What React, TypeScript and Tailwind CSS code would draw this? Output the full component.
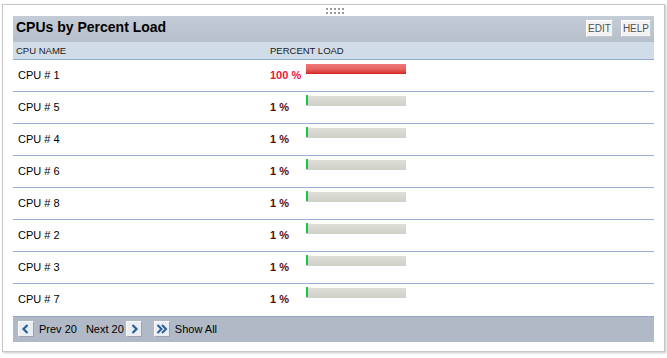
import React from "react";

const rows: { name: string; pct: number }[] = [
  { name: "CPU # 1", pct: 100 },
  { name: "CPU # 5", pct: 1 },
  { name: "CPU # 4", pct: 1 },
  { name: "CPU # 6", pct: 1 },
  { name: "CPU # 8", pct: 1 },
  { name: "CPU # 2", pct: 1 },
  { name: "CPU # 3", pct: 1 },
  { name: "CPU # 7", pct: 1 },
];

function Chevron({ dir }: { dir: "left" | "right" | "double" }) {
  return (
    <div className="w-[16px] h-[16px] bg-[#eaeef3] border border-t-[#f8f9fb] border-l-[#f8f9fb] border-b-[#9aa3b0] border-r-[#9aa3b0] flex items-center justify-center">
      <svg width="12" height="12" viewBox="0 0 12 12">
        {dir === "left" && (
          <path d="M7.5 2 L3.5 6 L7.5 10" fill="none" stroke="#2b5e9c" strokeWidth="2.2" />
        )}
        {dir === "right" && (
          <path d="M4.5 2 L8.5 6 L4.5 10" fill="none" stroke="#2b5e9c" strokeWidth="2.2" />
        )}
        {dir === "double" && (
          <>
            <path d="M1.5 2 L5.5 6 L1.5 10" fill="none" stroke="#2b5e9c" strokeWidth="2" />
            <path d="M6 2 L10 6 L6 10" fill="none" stroke="#2b5e9c" strokeWidth="2" />
          </>
        )}
      </svg>
    </div>
  );
}

export default function App() {
  return (
    <div className="w-[667px] h-[358px] bg-white pt-[4px] pl-[2px] font-['Liberation_Sans',Arial,sans-serif]">
      <div className="w-[663px] h-[348px] border border-[#c6c6c6] bg-white shadow-[1px_1px_2px_rgba(0,0,0,0.22)] px-[10px] flex flex-col">
        {/* drag handle */}
        <div className="h-[11px] flex justify-center pt-[3px] pl-[3px]">
          <div className="grid grid-cols-5 gap-x-[2px] gap-y-[2px] h-[6px]">
            {Array.from({ length: 10 }).map((_, i) => (
              <div key={i} className="w-[2px] h-[2px] bg-[#9a9a9a]" />
            ))}
          </div>
        </div>
        {/* header */}
        <div className="h-[26px] bg-gradient-to-b from-[#c4ccd7] to-[#b6bfca] flex items-center justify-between pl-[3px] pr-[3px]">
          <div className="text-[14px] font-bold text-black leading-none pb-[4px]">CPUs by Percent Load</div>
          <div className="flex gap-[8px] pb-[1px]">
            <div className="h-[17px] px-[1px] bg-[#f3f3f3] border border-t-white border-l-white border-b-[#c4c8ce] border-r-[#c4c8ce] text-[10px] text-[#505050] flex items-center leading-none">EDIT</div>
            <div className="h-[17px] px-[1px] bg-[#f3f3f3] border border-t-white border-l-white border-b-[#c4c8ce] border-r-[#c4c8ce] text-[10px] text-[#505050] flex items-center leading-none">HELP</div>
          </div>
        </div>
        {/* column header */}
        <div className="h-[18px] bg-[#d1dce9] border-b border-[#93aad0] flex items-center text-[9.5px] text-[#1a1a1a] leading-none">
          <div className="w-[257px] pl-[3px]">CPU NAME</div>
          <div>PERCENT LOAD</div>
        </div>
        {/* rows */}
        {rows.map((r, i) => (
          <div
            key={r.name}
            className={`h-[32px] flex items-center text-[11px] leading-none pb-[1px] ${i < rows.length - 1 ? "border-b border-[#98b0d6]" : ""}`}
          >
            <div className="w-[257px] pl-[5px] text-black">{r.name}</div>
            <div className={`w-[36px] font-bold ${r.pct === 100 ? "text-[#f0143a]" : "text-[#5a0808]"}`}>
              {r.pct} %
            </div>
            <div className="self-start mt-[4px]">
              {r.pct === 100 ? (
                <div className="w-[100px] h-[10px] bg-gradient-to-b from-[#ee7b7b] via-[#e66464] to-[#d41f1f]" />
              ) : (
                <div className="w-[100px] h-[10px] bg-gradient-to-b from-[#dfdfd9] to-[#cfcfc8] flex">
                  <div className="w-[2px] h-[10px] bg-[#1fbf4a] -mt-[1px]" />
                </div>
              )}
            </div>
          </div>
        ))}
        {/* footer */}
        <div className="h-[26px] bg-[#b1b9c6] border-t border-[#95a7c8] flex items-center pl-[5px] pb-[1px] text-[11px] text-black leading-none">
          <Chevron dir="left" />
          <span className="ml-[5px]">Prev 20</span>
          <span className="ml-[9px]">Next 20</span>
          <div className="ml-[2px]"><Chevron dir="right" /></div>
          <div className="ml-[12px]"><Chevron dir="double" /></div>
          <span className="ml-[5px]">Show All</span>
        </div>
      </div>
    </div>
  );
}
